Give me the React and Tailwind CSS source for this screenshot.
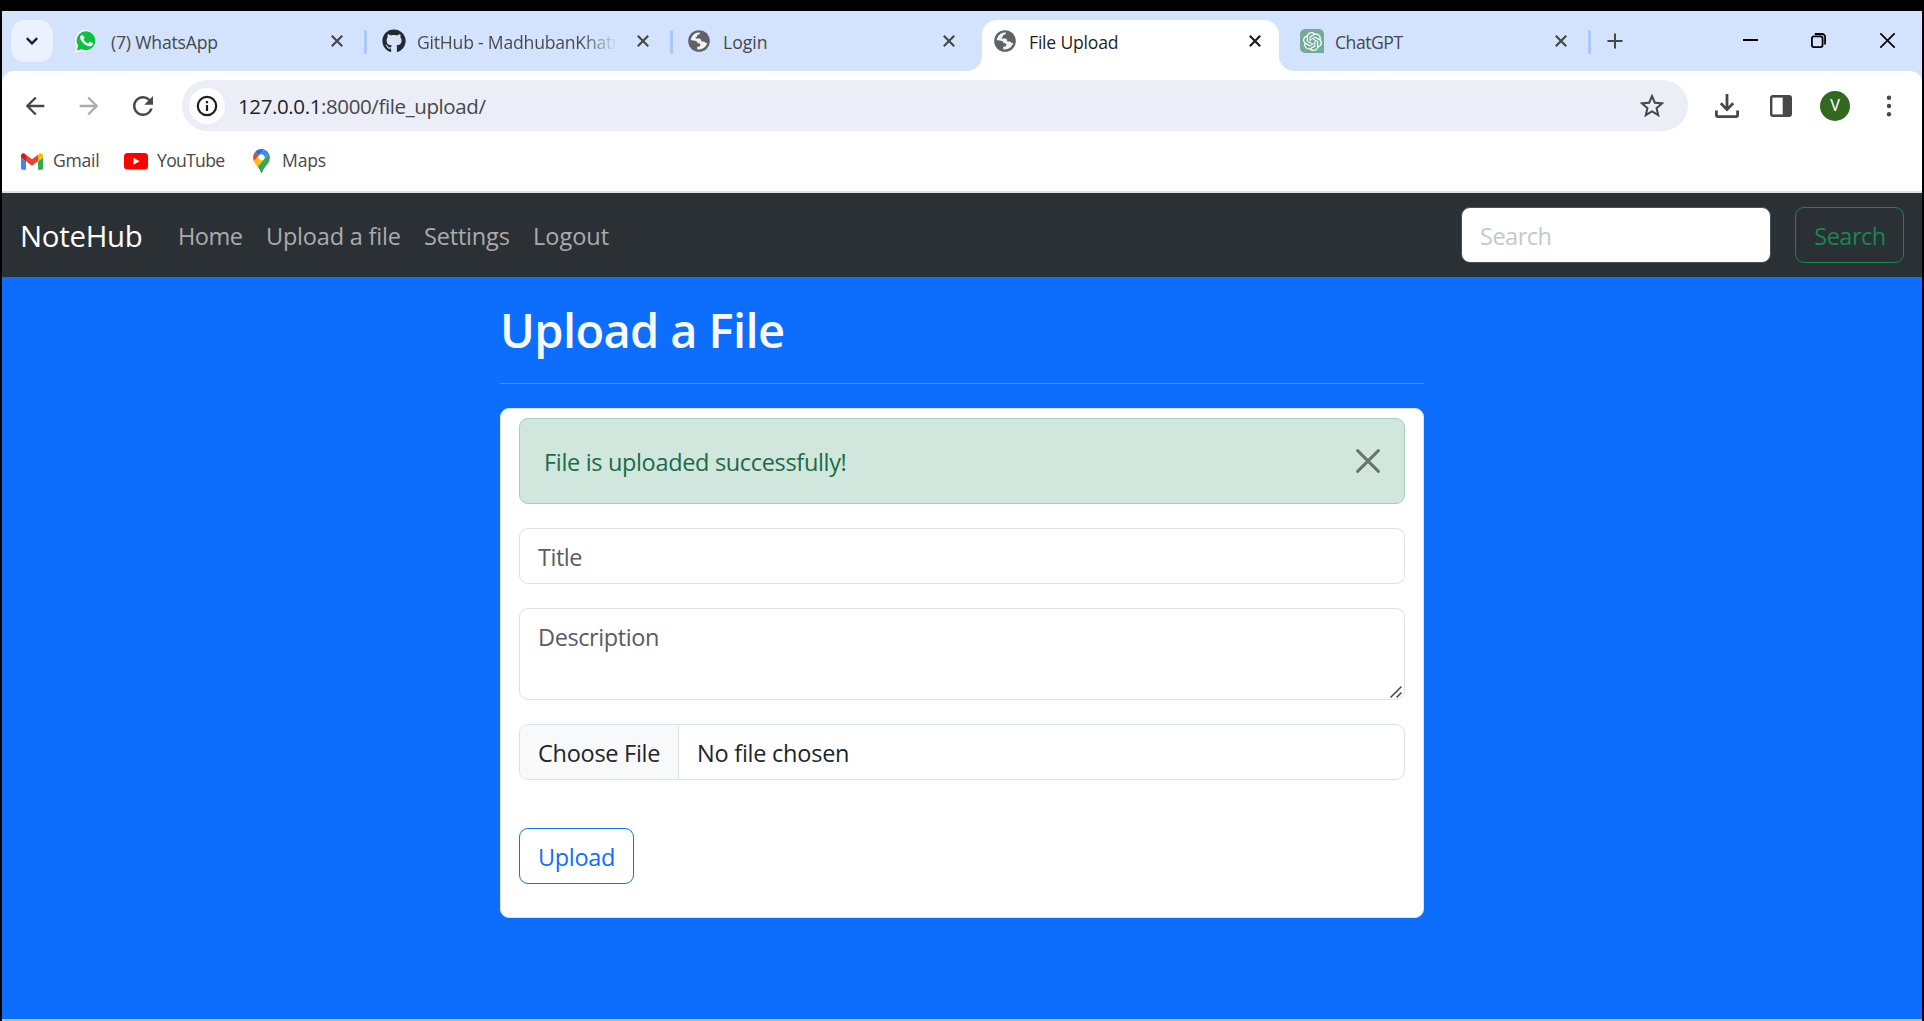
import React from "react";
import { FaGithub } from "react-icons/fa";
import { MdArrowBack, MdArrowForward, MdRefresh, MdStarBorder } from "react-icons/md";
import { SiOpenai } from "react-icons/si";

const WhatsAppIcon = () => (
  <svg viewBox="0 0 24 24" className="h-6 w-6 -translate-x-[2px]">
    <path fill="#fff" d="M12.2.9A10.8 10.8 0 0 0 2.9 17.2L1 23.6l6.5-1.7A10.8 10.8 0 1 0 12.2.9z" />
    <path fill="#0dc143" d="M12.2 2.2a9.5 9.5 0 0 0-8.1 14.6L2.9 21.6l4.9-1.3A9.5 9.5 0 1 0 12.2 2.2z" />
    <path
      fill="#fff"
      d="M9 6.6c-.3-.6-.5-.6-.9-.6-.9 0-2 1-2 2.6 0 1.500 1.100 2.900 1.300 3.200.2.200 2.200 3.500 5.400 4.700 2.700 1.100 3.200.8 3.800.8s1.900-.8 2.100-1.500c.300-.7.300-1.400.2-1.500-.1-.2-.3-.3-.6-.4l-2.200-1.100c-.3-.1-.5-.2-.7.200l-1 1.200c-.2.200-.4.200-.7.100-.3-.2-1.300-.5-2.500-1.600-.9-.8-1.500-1.900-1.700-2.200-.2-.3 0-.5.100-.6l.8-1c.1-.2.100-.3 0-.6z"
    />
  </svg>
);

const GlobeIcon = () => (
  <svg viewBox="0 0 22 22" className="h-[22px] w-[22px]">
    <circle cx="11" cy="11" r="10.800" fill="#5f6368" />
    <path
      fill="#fff"
      fillOpacity=".92"
      d="M3.600 7.200C5 4.400 7.900 2.500 11.200 2.500h.9c-.1 1.500-1.200 2.300-2.600 2.400-.4 0-.5.600-.5 1.300 0 .9-1.500.8-1.500 1.700 0 .8 1.900.4 3.600.6 1.500.2 2 1.200 2.100 2.300.1.900 1.100.8 2.200.8 1.400 0 1.700.9 2.300 1.300.5.300 1.100.2 1.500 0-.5 1.900-1.700 3.700-3.300 4.900-1.400 1.100-3.200 1.700-5 1.700-.6 0-1.200-.1-1.700-.2v-1.500c0-1 .8-1.200 1.900-1.200 1.200 0 1.200-1 1.200-1.900 0-1.200-.9-1.400-2-1.500-1.200-.1-1.200-1.500-2.200-2.100C6.700 10.300 4.400 10.300 2.700 10.200c.1-1.100.4-2.100.9-3z"
    />
  </svg>
);

const ChatGptIcon = () => (
  <div className="flex h-6 w-6 items-center justify-center rounded-tl-[5px] rounded-tr-[5px] rounded-bl-[5px] bg-[#74aa9c]">
    <SiOpenai className="h-[19px] w-[19px] text-white" />
  </div>
);

const GmailIcon = () => (
  <svg viewBox="52 42 88 66" className="h-[17px] w-[22px]">
    <path fill="#4285f4" d="M58 108h14V74L52 59v43c0 3.320 2.690 6 6 6" />
    <path fill="#34a853" d="M120 108h14c3.320 0 6-2.690 6-6V59l-20 15" />
    <path fill="#fbbc04" d="M120 48v26l20-15v-8c0-7.420-8.470-11.650-14.400-7.200" />
    <path fill="#ea4335" d="M72 74V48l24 18 24-18v26L96 92" />
    <path fill="#c5221f" d="M52 51v8l20 15V48l-5.600-4.200c-5.940-4.450-14.400-.22-14.400 7.200" />
  </svg>
);

const YouTubeIcon = () => (
  <svg viewBox="0 0 24 17" className="h-[17px] w-6">
    <rect width="24" height="16.500" rx="3.500" fill="#f00" />
    <path fill="#fff" d="M9.500 4.800v7l6.200-3.500z" />
  </svg>
);

const MapsIcon = () => (
  <svg viewBox="0 0 92.300 132.300" className="h-6 w-[17px]">
    <path fill="#1a73e8" d="M60.200 2.200C55.800.8 51 0 46.100 0 32 0 19.300 6.400 10.800 16.500l21.800 18.300z" />
    <path fill="#ea4335" d="M10.800 16.500C4.100 24.500 0 34.900 0 46.100c0 8.700 1.700 15.700 4.600 22l28-33.300z" />
    <path fill="#4285f4" d="M46.200 28.500c9.800 0 17.700 7.900 17.700 17.700 0 4.300-1.600 8.300-4.200 11.400 0 0 13.900-16.600 27.500-32.700-5.600-10.800-15.300-19-27-22.700L32.600 34.800c3.300-3.800 8.100-6.300 13.600-6.300" />
    <path fill="#fbbc04" d="M46.200 63.800c-9.800 0-17.700-7.900-17.700-17.700 0-4.300 1.500-8.300 4.100-11.300l-28 33.300c4.800 10.600 12.800 19.200 21 29.900l34.100-40.500c-3.300 3.900-8.100 6.300-13.500 6.300" />
    <path fill="#34a853" d="M59.100 109.200c15.400-24.100 33.300-35 33.300-63 0-7.700-1.900-14.900-5.200-21.300L25.600 98c2.600 3.400 5.300 7.300 7.900 11.300 9.400 14.500 6.800 23.100 12.800 23.100s3.400-8.700 12.800-23.200" />
  </svg>
);

const CloseGlyph = () => (
  <svg viewBox="0 0 12 12" className="h-3 w-3" fill="none" stroke="currentColor" strokeWidth="2.200">
    <path d="M.8.8l10.400 10.400M11.200.8L.8 11.200" />
  </svg>
);

const tabs = [
  { title: "(7) WhatsApp", icon: <WhatsAppIcon />, text: "tracking-[-0.190px]", divider: true },
  { title: "GitHub - MadhubanKhatr", icon: <FaGithub className="h-6 w-6 text-[#24292f]" />, text: "tracking-[-0.220px]", divider: true, fade: true },
  { title: "Login", icon: <GlobeIcon />, text: "" },
  { title: "File Upload", icon: <GlobeIcon />, text: "tracking-[-0.200px]", active: true },
  { title: "ChatGPT", icon: <ChatGptIcon />, text: "tracking-[-0.470px]", divider: true },
];

function Tab({ tab }) {
  return (
    <div className="flex h-full w-[306px] shrink-0 pt-[9px]">
      <div
        className={
          tab.active
            ? "relative ml-[3px] flex h-[51px] w-[297px] items-start rounded-t-[15px] bg-white pl-[13px] text-[#1f1f1f]"
            : "ml-[3px] flex h-[51px] w-[297px] items-start pl-[13px] text-[#474747]"
        }
      >
        {tab.active && (
          <>
            <svg viewBox="0 0 15 15" className="absolute bottom-0 -left-[15px] h-[15px] w-[15px] fill-white">
              <path d="M15 0v15H0A15 15 0 0 0 15 0z" />
            </svg>
            <svg viewBox="0 0 15 15" className="absolute -right-[15px] bottom-0 h-[15px] w-[15px] fill-white">
              <path d="M0 0v15h15A15 15 0 0 1 0 0z" />
            </svg>
          </>
        )}
        <div className="-ml-px flex h-[42px] w-[35px] shrink-0 items-center">{tab.icon}</div>
        <div
          className={
            "w-[205px] overflow-hidden pt-[2px] text-[17.600px] leading-[41px] whitespace-nowrap " +
            (tab.fade ? "bg-linear-to-r from-[#474747] from-80% to-transparent to-98% bg-clip-text text-transparent " : "") +
            tab.text
          }
        >
          {tab.title}
        </div>
        <div className="ml-[15px] flex h-[42px] items-center">
          <CloseGlyph />
        </div>
      </div>
      {tab.divider && <div className="mt-[10px] ml-[3px] h-6 w-[3px] rounded-full bg-[#a8c7fa]" />}
    </div>
  );
}

function TabStrip() {
  return (
    <div className="flex h-[60px] bg-[#d3e3fd]">
      <div className="mt-[9px] ml-[9px] flex h-[42px] w-[42px] items-center justify-center rounded-[14px] bg-[#ebf1ff]">
        <svg viewBox="0 0 12 8" className="h-2 w-3" fill="none" stroke="#1f1f1f" strokeWidth="2.400">
          <path d="M.8 1.200L6 6.400l5.200-5.200" />
        </svg>
      </div>
      <div className="ml-2 flex">
        {tabs.map((tab) => (
          <Tab key={tab.title} tab={tab} />
        ))}
      </div>
      <svg viewBox="0 0 16 16" className="mt-[22px] ml-4 h-4 w-4" stroke="#474747" strokeWidth="2">
        <path d="M8 .5v15M.5 8h15" />
      </svg>
      <div className="mt-[22px] mr-[27px] ml-auto flex">
        <svg viewBox="0 0 15 15" className="h-[15px] w-[15px]" stroke="#000" strokeWidth="2">
          <path d="M0 7h15" />
        </svg>
        <svg viewBox="0 0 15 15" className="ml-[53px] h-[15px] w-[15px]" fill="none" stroke="#000" strokeWidth="1.800">
          <rect x=".9" y="3.400" width="10.700" height="10.700" rx="2" />
          <path d="M3.800 1H11a3.100 3.100 0 0 1 3.100 3.100v7.300" />
        </svg>
        <svg viewBox="0 0 15 15" className="ml-[54px] h-[15px] w-[15px]" stroke="#000" strokeWidth="1.700">
          <path d="M.3.300l14.400 14.400M14.700.300L.3 14.700" />
        </svg>
      </div>
    </div>
  );
}

function Toolbar() {
  return (
    <div className="flex h-[69px] items-center text-[#474747]">
      <MdArrowBack className="ml-[19px] h-[28px] w-[28px]" />
      <MdArrowForward className="ml-[26px] h-[28px] w-[28px] text-[#ababab]" />
      <MdRefresh className="ml-[25px] h-[30px] w-[30px]" />
      <div className="ml-6 flex h-[51px] w-[1506px] items-center rounded-full bg-[#ebeef7]">
        <div className="ml-[7px] flex h-9 w-9 items-center justify-center rounded-full bg-white">
          <svg viewBox="0 0 22 22" className="h-[22px] w-[22px]" fill="none" stroke="#1f1f1f" strokeWidth="2.200">
            <circle cx="11" cy="11" r="9.200" />
            <path d="M11 10v6M11 6v2.300" />
          </svg>
        </div>
        <div className="ml-[13px] text-[20.500px] leading-[30px] tracking-[-0.390px] text-[#474747]">
          <span className="text-[#1f1f1f]">127.0.0.1</span>:8000/file_upload/
        </div>
        <MdStarBorder className="mr-[21px] ml-auto h-[30px] w-[30px]" />
      </div>
      <svg viewBox="0 0 24 24" className="ml-[27px] h-6 w-6" fill="none" stroke="currentColor" strokeWidth="2.800">
        <path d="M12 0v15M5.800 9.200l6.200 6.400 6.200-6.400" />
        <path d="M1.400 16.500v4.300c0 1 .7 1.800 1.800 1.800h17.600c1.100 0 1.800-.8 1.800-1.800v-4.300" />
      </svg>
      <svg viewBox="0 0 22 22" className="ml-[31px] h-[22px] w-[22px]">
        <rect width="22" height="22" rx="3" fill="currentColor" />
        <path fill="#fff" d="M2.400 2.600h10.300v16.800H2.400z" />
      </svg>
      <div className="ml-7 flex h-[30px] w-[30px] items-center justify-center rounded-full bg-[#33691e] pt-px font-['Roboto',sans-serif] text-base text-white">
        V
      </div>
      <svg viewBox="0 0 6 22" className="ml-9 h-[22px] w-1.5" fill="currentColor">
        <circle cx="3" cy="2.800" r="2.200" />
        <circle cx="3" cy="11" r="2.200" />
        <circle cx="3" cy="19.200" r="2.200" />
      </svg>
    </div>
  );
}

function Bookmarks() {
  return (
    <div className="flex h-[51px] text-[17.600px] leading-[40px] text-[#474747]">
      <div className="flex h-[42px] w-[103px] items-center pl-[19px]">
        <GmailIcon />
        <span className="ml-[10px] pb-[2px] tracking-[-0.250px]">Gmail</span>
      </div>
      <div className="flex h-[42px] w-[129px] items-center pl-[19px]">
        <YouTubeIcon />
        <span className="ml-[9px] pb-[2px] tracking-[-0.700px]">YouTube</span>
      </div>
      <div className="flex h-[42px] items-center pl-[19px]">
        <MapsIcon />
        <span className="ml-[12px] pb-[2px] tracking-[-0.170px]">Maps</span>
      </div>
    </div>
  );
}

function Navbar() {
  return (
    <nav className="flex h-[84px] items-center bg-[#2b3035] pl-[18px] text-[23.500px] text-[#aaacae]">
      <a className="w-[158px] pt-px text-[29.400px] leading-[44px] tracking-[-0.270px] text-white">NoteHub</a>
      <div className="flex pt-px leading-9">
        <a className="w-[88px] tracking-[-0.500px]">Home</a>
        <a className="w-[158px] tracking-[-0.200px]">Upload a file</a>
        <a className="w-[109px] tracking-[-0.180px]">Settings</a>
        <a>Logout</a>
      </div>
      <input
        placeholder="Search"
        className="ml-auto h-14 w-[310px] rounded-[9px] border border-[#495057] bg-white pt-[2px] pl-[18px] tracking-[-0.500px] outline-none placeholder:text-[#c4c8cd]"
      />
      <button className="mr-[18px] ml-6 h-14 w-[109px] rounded-[9px] border border-[#198754] pt-[3px] pl-px tracking-[-0.500px] text-[#198754]">
        Search
      </button>
    </nav>
  );
}

function UploadPage() {
  return (
    <main className="flex grow flex-col items-center bg-[#0d6efd] text-[23.500px]">
      <div className="w-[924px]">
        <h1 className="mt-6 h-[82px] text-[47px] leading-[58px] font-semibold tracking-[-0.620px] text-[#f8f9fa]">
          Upload a File
        </h1>
        <div className="h-px bg-[#4792fd]" />
        <section className="mt-6 flex h-[510px] flex-col rounded-[9px] border border-[#dee2e6] bg-white px-[18px] pt-[9px]">
          <div className="flex h-[86px] shrink-0 items-center justify-between rounded-[9px] border border-[#a3cfbb] bg-[#d1e7dd] pr-6 pl-6 text-[#1a6b47]">
            <span className="pt-[3px] tracking-[-0.330px]">File is uploaded successfully!</span>
            <svg viewBox="0 0 24 24" className="h-6 w-6" stroke="#68736e" strokeWidth="2.900" strokeLinecap="round">
              <path d="M1.600 1.600l20.800 20.800M22.400 1.600L1.600 22.400" />
            </svg>
          </div>
          <input
            placeholder="Title"
            className="mt-6 h-14 shrink-0 rounded-[9px] border border-[#dee2e6] pt-[2px] pl-[18px] tracking-[-0.500px] outline-none placeholder:text-[#595c5f]"
          />
          <div className="relative mt-6 h-[92px] shrink-0">
            <textarea
              placeholder="Description"
              className="block h-full w-full resize-none overflow-hidden rounded-[9px] border border-[#dee2e6] pt-[10px] pl-[18px] leading-9 tracking-[-0.400px] outline-none placeholder:text-[#595c5f]"
            />
            <svg viewBox="0 0 12 12" className="absolute right-[3px] bottom-[2px] h-3 w-3" stroke="#444" strokeWidth="1.500">
              <path d="M.5 11.500l11-11M6.500 11.500l5-5" />
            </svg>
          </div>
          <div className="mt-6 flex h-14 shrink-0 items-stretch overflow-hidden rounded-[9px] border border-[#dee2e6] leading-[54px] text-[#212529]">
            <div className="w-[159px] border-r border-[#dee2e6] bg-[#f8f9fa] pt-[1px] pl-[18px] tracking-[-0.270px]">Choose File</div>
            <div className="pt-[1px] pl-[18px] tracking-[-0.240px]">No file chosen</div>
          </div>
          <button className="mt-12 h-14 w-[115px] shrink-0 rounded-[9px] border border-[#0d6efd] pt-[3px] tracking-[-0.300px] text-[#0d6efd]">
            Upload
          </button>
        </section>
      </div>
    </main>
  );
}

export default function App() {
  return (
    <div className="flex h-[1021px] w-[1924px] flex-col overflow-hidden bg-black px-[2px] pt-[11px] font-['Open_Sans','Noto_Sans',sans-serif]">
      <TabStrip />
      <div className="h-[120px] bg-[#d3e3fd]">
        <div className="h-full rounded-t-[12px] bg-white">
          <Toolbar />
          <Bookmarks />
        </div>
      </div>
      <div className="h-[2px] bg-[#dde3dd]" />
      <Navbar />
      <UploadPage />
      <div className="h-[2px] bg-[#b4bfcc]" />
    </div>
  );
}
